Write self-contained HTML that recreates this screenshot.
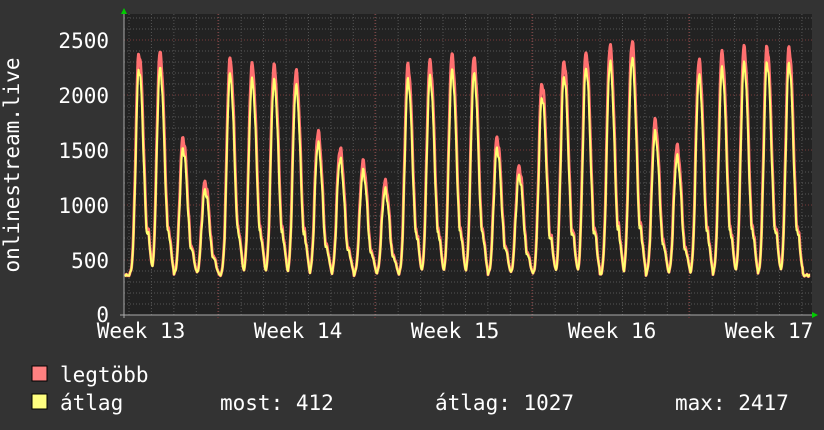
<!DOCTYPE html>
<html><head><meta charset="utf-8"><style>
html,body{margin:0;padding:0;background:#333;}
svg{display:block}
text{font-family:"DejaVu Sans Mono","Liberation Mono",monospace;fill:#fff;font-size:21px}
</style></head><body>
<svg id="g" width="824" height="430" xmlns="http://www.w3.org/2000/svg">
<rect width="824" height="430" fill="#333"/>
<rect x="124" y="14" width="688" height="301" fill="#222"/>
<g id="grid"></g>
<g id="data"></g>
<line x1="120" y1="315" x2="812" y2="315" stroke="#aaa" stroke-width="1"/>
<line x1="124" y1="12" x2="124" y2="318" stroke="#aaa" stroke-width="1"/>
<polygon points="121,14 127,14 124,8" fill="#0c0"/>
<polygon points="812,312 812,318 818,315" fill="#0c0"/>
<g text-anchor="end">
<text x="109" y="48">2500</text>
<text x="109" y="103">2000</text>
<text x="109" y="158">1500</text>
<text x="109" y="213">1000</text>
<text x="109" y="268">500</text>
<text x="109" y="322">0</text>
</g>
<g text-anchor="middle">
<text x="141" y="338">Week 13</text>
<text x="298" y="338">Week 14</text>
<text x="455" y="338">Week 15</text>
<text x="612" y="338">Week 16</text>
<text x="769" y="338">Week 17</text>
</g>
<text transform="translate(19,165) rotate(-90)" text-anchor="middle">onlinestream.live</text>
<rect x="32" y="366" width="15" height="15" fill="#ff8080" stroke="#000"/>
<rect x="32" y="394" width="15" height="15" fill="#ffff80" stroke="#000"/>
<text x="60" y="382">legtöbb</text>
<text x="60" y="410">átlag</text>
<text x="220" y="410">most: 412</text>
<text x="435" y="410">átlag: 1027</text>
<text x="675" y="410">max: 2417</text>
</svg>
<script>
var NS="http://www.w3.org/2000/svg";
var grid=document.getElementById('grid');
function ln(x1,y1,x2,y2,c){var l=document.createElementNS(NS,'line');l.setAttribute('x1',x1);l.setAttribute('y1',y1);l.setAttribute('x2',x2);l.setAttribute('y2',y2);l.setAttribute('stroke',c);l.setAttribute('stroke-dasharray','1,2');l.setAttribute('stroke-width','1');grid.appendChild(l);}
for(var v=100;v<=2700;v+=100){var y=315-v*0.11;ln(124,y,812,y,v%500==0?'#7a3a3a':'#555');}
for(var i=0;i<31;i++){var x=129+i*22.43;ln(x,14,x,315,'#555');}
[218,375,532,689].forEach(function(x){ln(x,14,x,320,'#8a3a3a');});
var peaks=[[139,2370],[160,2370],[183,1600],[205,1200],[230,2310],[252,2260],[274,2250],[296,2200],[318,1650],[340,1500],[363,1380],[385,1200],[408,2260],[430,2290],[452,2350],[474,2320],[497,1600],[519,1340],[542,2100],[564,2300],[586,2380],[610,2430],[632,2470],[655,1750],[677,1520],[699,2300],[722,2370],[744,2420],[767,2430],[789,2420]];
function val(x,avg){var best=0;var base=360;
 for(var k=0;k<peaks.length;k++){var d=x-peaks[k][0];var p=peaks[k][1]*(avg?0.94:1);var w=d<0?3.2:4.5;var t=d/w;var f=Math.exp(-Math.pow(Math.abs(t),2.2)/2);
  if(d>0&&d<14) f=Math.max(f,0.22*Math.exp(-Math.pow((d-8)/4,2)));
  var r=(p-base)*f;if(r>best)best=r;}
 var n=Math.sin(x*1.7)*25+Math.sin(x*3.1)*15;return base+best+n*(best>300?1:0.3);}
function poly(avg,color,w){var pts=[];for(var x=125;x<=810;x+=0.5){var v=val(x,avg);pts.push(x+','+(315-v*0.11).toFixed(1));}
 var p=document.createElementNS(NS,'polyline');p.setAttribute('points',pts.join(' '));p.setAttribute('fill','none');p.setAttribute('stroke',color);p.setAttribute('stroke-width',w);p.setAttribute('stroke-linejoin','round');document.getElementById('data').appendChild(p);}
poly(false,'#ff7070',3);poly(true,'#ffff70',2);
</script>
</body></html>
